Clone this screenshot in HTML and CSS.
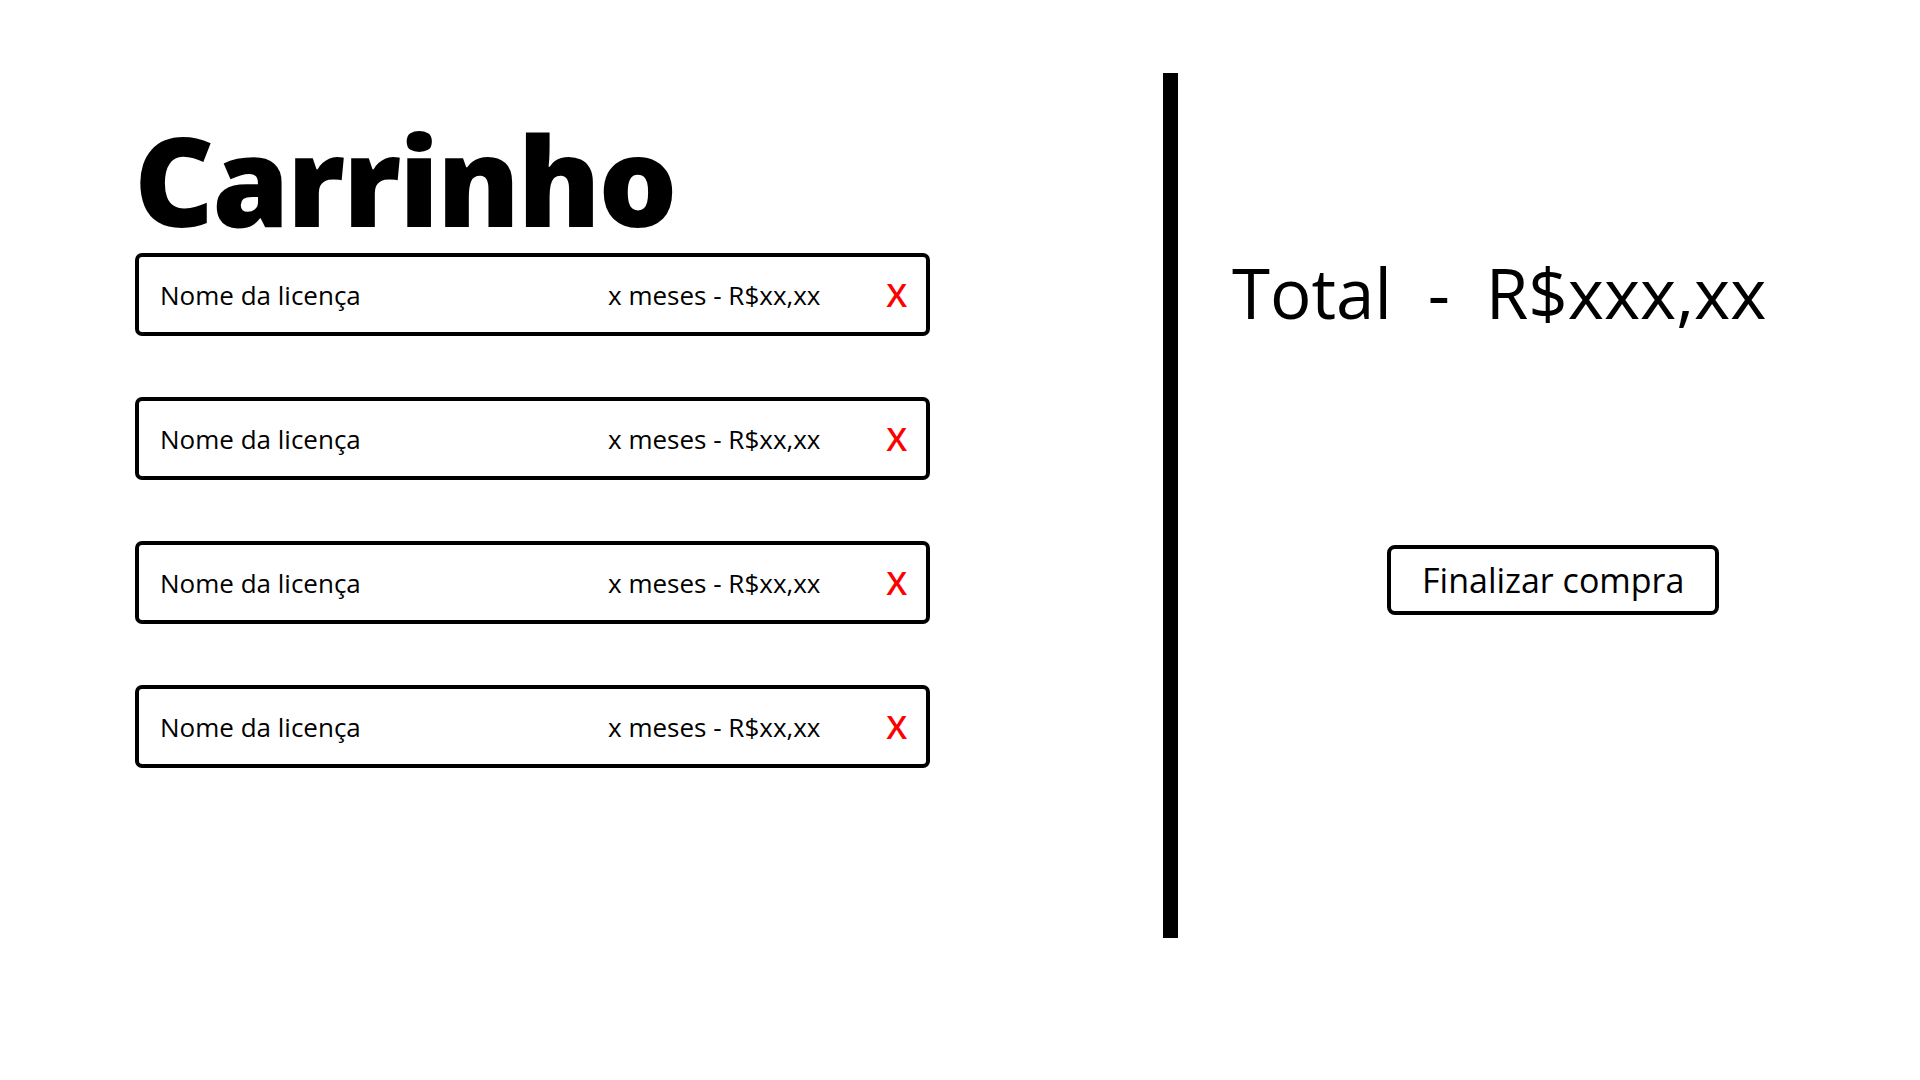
FILE: index.html
```html
<!DOCTYPE html>
<html lang="pt-BR">
<head>
<meta charset="utf-8">
<title>Carrinho</title>
<link rel="stylesheet" href="styles.css">
</head>
<body>
<div class="page">
  <section class="cart">
    <h1 class="title">Carrinho</h1>
    <ul class="items">
      <li class="item">
        <span class="item-name">Nome da licença</span>
        <span class="item-price">x meses - R$xx,xx</span>
        <button class="item-remove" type="button">X</button>
      </li>
      <li class="item">
        <span class="item-name">Nome da licença</span>
        <span class="item-price">x meses - R$xx,xx</span>
        <button class="item-remove" type="button">X</button>
      </li>
      <li class="item">
        <span class="item-name">Nome da licença</span>
        <span class="item-price">x meses - R$xx,xx</span>
        <button class="item-remove" type="button">X</button>
      </li>
      <li class="item">
        <span class="item-name">Nome da licença</span>
        <span class="item-price">x meses - R$xx,xx</span>
        <button class="item-remove" type="button">X</button>
      </li>
    </ul>
  </section>
  <div class="divider"></div>
  <aside class="summary">
    <div class="total">Total&nbsp;&nbsp;-&nbsp;&nbsp;R$xxx,xx</div>
    <button class="checkout" type="button">Finalizar compra</button>
  </aside>
</div>
</body>
</html>
```
FILE: styles.css
```css
* { box-sizing: border-box; }

html, body {
  margin: 0;
  padding: 0;
  background: #ffffff;
  color: #000000;
  font-family: "Open Sans", "Liberation Sans", sans-serif;
}

.page {
  display: flex;
  width: 1920px;
  height: 1080px;
}

.cart {
  width: 1163px;
  padding-left: 135px;
  padding-top: 117px;
}

.title {
  margin: 0 0 0 -1px;
  font-size: 124px;
  line-height: 1;
  font-weight: 800;
  letter-spacing: -2.3px;
}

.items {
  list-style: none;
  margin: 12px 0 0;
  padding: 0;
  width: 795px;
  display: flex;
  flex-direction: column;
  gap: 61px;
}

.item {
  display: flex;
  align-items: center;
  height: 83px;
  border: 4px solid #000;
  border-radius: 7px;
  padding: 0 19px 0 21px;
  font-size: 26px;
}

.item-name {
  flex: 1;
}

.item-price {
  margin-right: 66px;
}

.item-remove {
  border: 0;
  background: none;
  padding: 0;
  font-family: inherit;
  font-size: 33px;
  font-weight: 600;
  line-height: 1;
  color: #ff0000;
}

.divider {
  width: 15px;
  height: 865px;
  margin-top: 73px;
  background: #000;
  flex: none;
}

.summary {
  padding-left: 54px;
  padding-top: 258px;
  display: flex;
  flex-direction: column;
  align-items: flex-start;
}

.total {
  font-size: 69px;
  line-height: 1;
  white-space: nowrap;
}

.checkout {
  margin-top: 218px;
  margin-left: 155px;
  height: 70px;
  padding: 0 31px;
  border: 4px solid #000;
  border-radius: 8px;
  background: #fff;
  color: #000;
  font-family: inherit;
  font-size: 34px;
  line-height: 1;
}
```
